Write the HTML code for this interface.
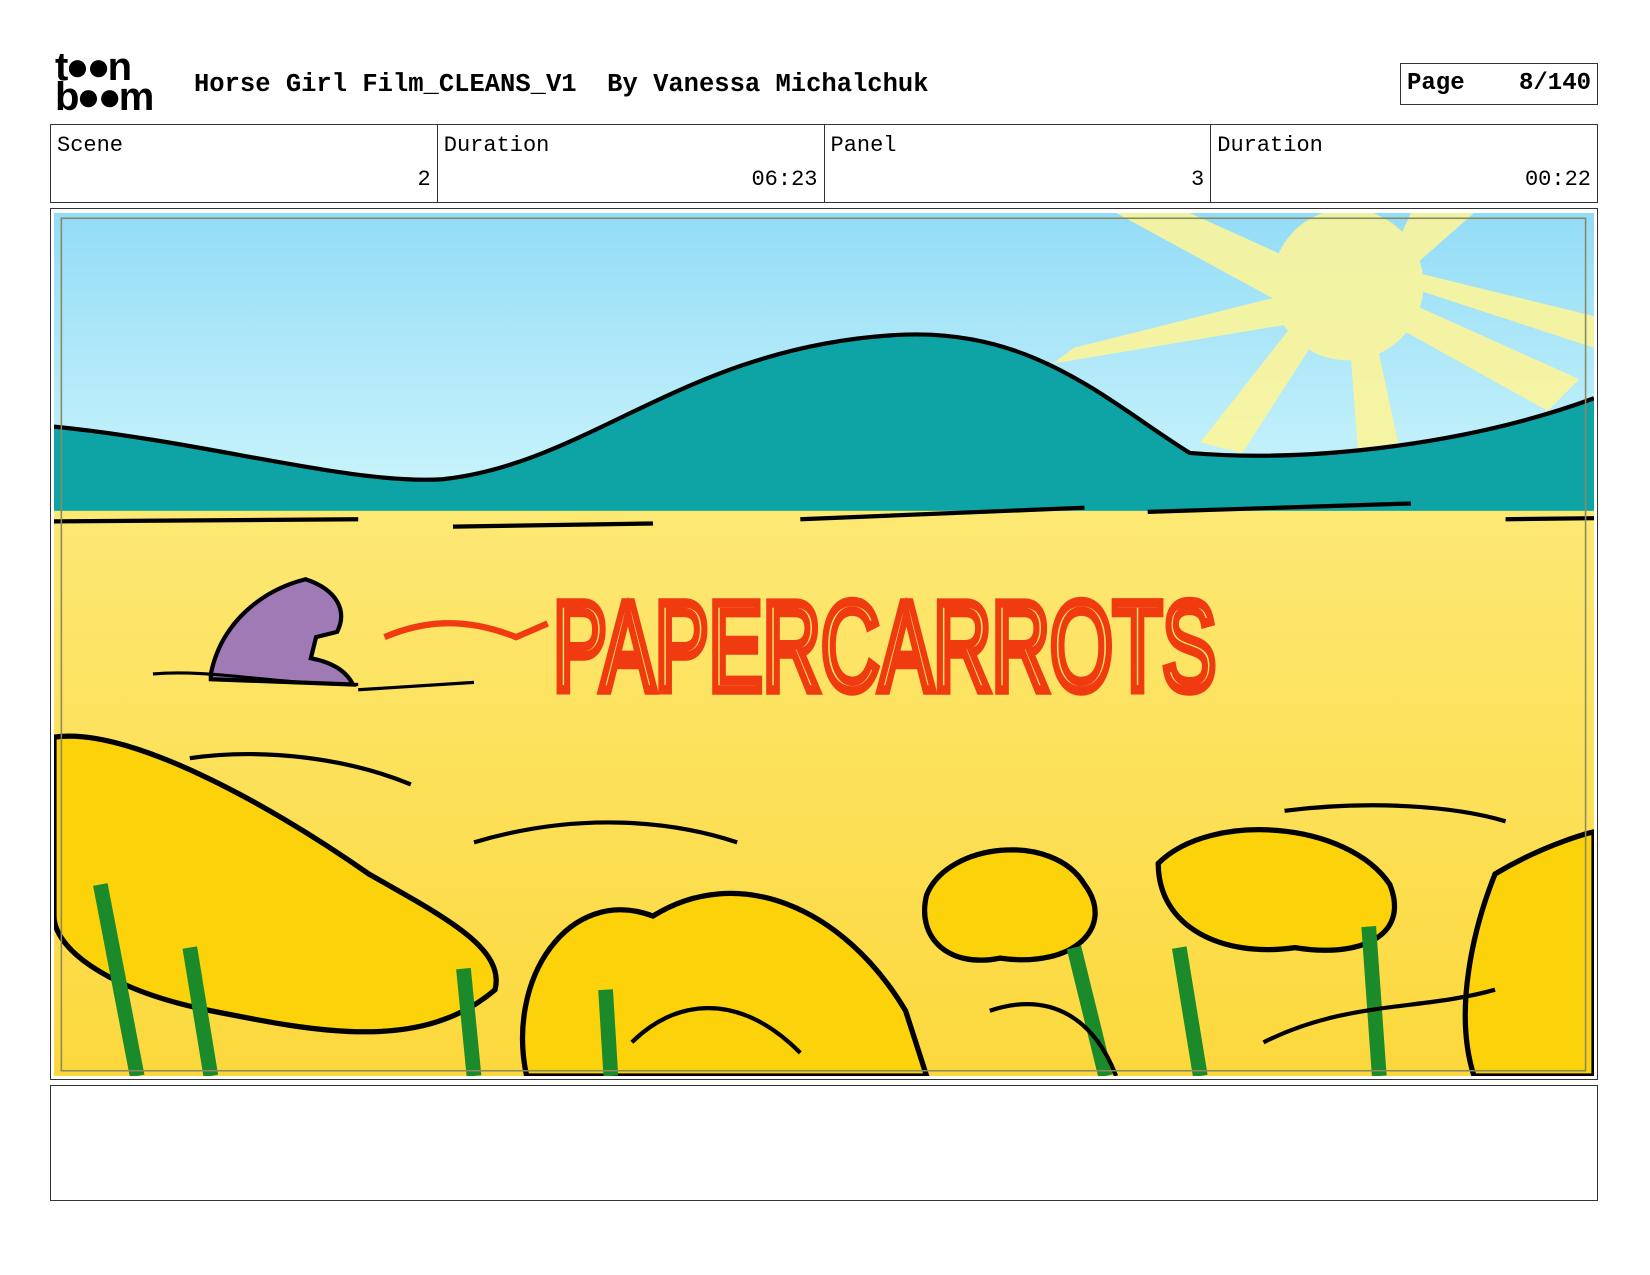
<!DOCTYPE html>
<html><head><meta charset="utf-8"><style>
body{margin:0;width:1650px;height:1275px;background:#fff;position:relative;overflow:hidden;font-family:"Liberation Mono",monospace}
.a{position:absolute}
.logo{left:55px;top:52px;font-family:"Liberation Sans",sans-serif;font-weight:bold;font-size:40px;line-height:30px;letter-spacing:-3px}
.title{left:194px;top:70px;font-weight:bold;font-size:25.5px}
.page{left:1400px;top:63px;width:198px;height:42px;border:1px solid #333;font-weight:bold;font-size:24px;box-sizing:border-box}
.tbl{left:50px;top:124px;width:1548px;height:79px;border:1px solid #333;box-sizing:border-box;display:flex}
.tbl div{flex:1;border-right:1px solid #333;position:relative;font-size:22px}
.tbl div:last-child{border-right:none}
.tbl span{position:absolute}
.frame{left:50px;top:208px;width:1548px;height:872px;border:1px solid #333;box-sizing:border-box}
.notes{left:50px;top:1085px;width:1548px;height:116px;border:1px solid #333;box-sizing:border-box}
</style></head><body>
<div class="a logo">t●●n<br>b●●m</div>
<div class="a title">Horse Girl Film_CLEANS_V1&nbsp; By Vanessa Michalchuk</div>
<div class="a page"><span class="a" style="left:6px;top:6px">Page</span><span class="a" style="right:6px;top:6px">8/140</span></div>
<div class="a tbl">
<div><span style="left:6px;top:8px">Scene</span><span style="right:6px;top:42px">2</span></div>
<div><span style="left:6px;top:8px">Duration</span><span style="right:6px;top:42px">06:23</span></div>
<div><span style="left:6px;top:8px">Panel</span><span style="right:6px;top:42px">3</span></div>
<div><span style="left:6px;top:8px">Duration</span><span style="right:6px;top:42px">00:22</span></div>
</div>
<div class="a frame"></div>
<svg class="a" style="left:54px;top:213px" width="1540" height="863" viewBox="51 202 1463 820" preserveAspectRatio="none">
<defs>
<linearGradient id="sky" x1="0" y1="0" x2="0" y2="1"><stop offset="0" stop-color="#93dcf7"/><stop offset="1" stop-color="#cff6fb"/></linearGradient>
<linearGradient id="fld" x1="0" y1="0" x2="0" y2="1"><stop offset="0" stop-color="#fde874"/><stop offset="1" stop-color="#fcd83c"/></linearGradient>
</defs>
<rect x="51" y="202" width="1463" height="290" fill="url(#sky)"/>
<g fill="#fbf59a" opacity="0.9">
<polygon points="1060,202 1130,202 1280,270 1240,300"/>
<polygon points="1340,202 1400,202 1300,290"/>
<polygon points="1000,345 1020,330 1260,270 1270,300"/>
<polygon points="1140,420 1180,430 1270,290 1250,280"/>
<polygon points="1290,430 1330,430 1300,290 1280,300"/>
<polygon points="1470,390 1500,360 1300,270 1290,290"/>
<polygon points="1514,300 1514,330 1300,260 1310,250"/>
<circle cx="1280" cy="270" r="72"/>
</g>
<path d="M51,405 C200,420 330,460 420,455 C560,440 650,330 850,318 C980,310 1050,380 1130,430 C1250,440 1400,420 1514,378 L1514,492 L51,492 Z" fill="#0ea3a5"/>
<path d="M51,405 C200,420 330,460 420,455 C560,440 650,330 850,318 C980,310 1050,380 1130,430 C1250,440 1400,420 1514,378" fill="none" stroke="#000" stroke-width="4"/>
<rect x="51" y="485" width="1463" height="537" fill="url(#fld)"/>
<path d="M51,495 L340,493 M430,500 L620,497 M760,493 L1030,482 M1090,486 L1340,478 M1430,493 L1514,492" stroke="#000" stroke-width="4" fill="none"/>
<path d="M200,640 C210,590 250,560 290,550 C320,560 330,580 320,600 L300,605 L295,625 C320,630 330,640 335,650 L200,645 Z" fill="#a07ab5" stroke="#000" stroke-width="4"/>
<path d="M145,640 C200,635 260,650 340,650 M340,655 L450,648" fill="none" stroke="#000" stroke-width="3"/>
<path d="M365,605 C400,590 440,585 490,605 L520,592" fill="none" stroke="#f03a10" stroke-width="6"/>
<text x="525" y="655" font-family="Liberation Sans,sans-serif" font-size="120" fill="none" stroke="#f03a10" stroke-width="9" textLength="630" lengthAdjust="spacingAndGlyphs">PAPERCARROTS</text>
<g fill="#fcd20a" stroke="#000" stroke-width="5">
<path d="M51,700 C120,690 250,760 350,830 C420,870 480,900 470,940 C400,1000 300,980 200,960 C100,940 51,900 51,870 Z"/>
<path d="M500,1022 C480,930 540,840 620,870 C700,820 800,860 860,960 L880,1022 Z"/>
<path d="M880,850 C900,800 1000,790 1030,840 C1060,880 1020,920 950,910 C900,920 870,890 880,850 Z"/>
<path d="M1100,820 C1150,770 1280,780 1320,840 C1340,890 1290,910 1230,900 C1160,910 1100,880 1100,820 Z"/>
<path d="M1420,830 C1470,800 1514,790 1514,790 L1514,1022 L1400,1022 C1380,960 1400,880 1420,830 Z"/>
</g>
<g fill="none" stroke="#1a8a2a" stroke-width="14">
<path d="M95,840 L130,1022 M180,900 L200,1022 M440,920 L450,1022 M575,940 L580,1022 M1020,900 L1050,1022 M1120,900 L1140,1022 M1300,880 L1310,1022"/>
</g>
<g fill="none" stroke="#000" stroke-width="4">
<path d="M180,720 C250,710 330,720 390,745 M450,800 C550,770 640,780 700,800 M1220,770 C1300,760 1380,765 1430,780 M600,990 C640,950 700,940 760,1000 M940,960 C1000,940 1040,970 1060,1022 M1200,990 C1280,950 1350,960 1420,940"/>
</g>
<rect x="58" y="207" width="1448" height="810" fill="none" stroke="#8a8a60" stroke-width="1.5"/>
</svg>
<div class="a notes"></div>
</body></html>
